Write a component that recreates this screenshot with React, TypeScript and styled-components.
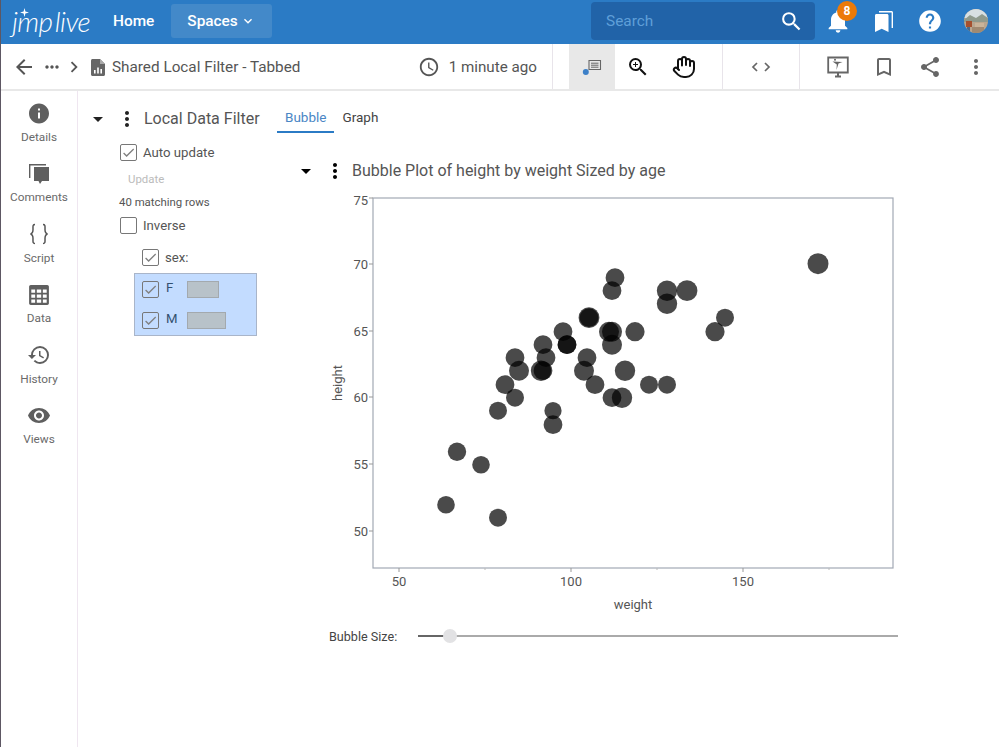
import React from "react";
import styled, { createGlobalStyle } from "styled-components";
import {
  MdArrowBack,
  MdMoreHoriz,
  MdChevronRight,
  MdAccessTime,
  MdZoomIn,
  MdBookmarkBorder,
  MdShare,
  MdMoreVert,
  MdSearch,
  MdNotifications,
  MdHelp,
  MdInfo,
  MdHistory,
  MdVisibility,
  MdArrowDropDown,
  MdExpandMore,
  MdCheck,
} from "react-icons/md";
import { LuHand } from "react-icons/lu";

const GlobalStyle = createGlobalStyle`
  html, body {
    margin: 0;
    padding: 0;
    background: #fff;
    font-family: Roboto, "Liberation Sans", sans-serif;
    overflow: hidden;
  }
  * { box-sizing: border-box; }
`;

const Page = styled.div`
  width: 999px;
  height: 747px;
  display: flex;
  flex-direction: column;
  border-left: 1px solid #5d5763;
  background: #fff;
`;

const TopBar = styled.header`
  height: 44px;
  flex: none;
  display: flex;
  align-items: center;
  padding-bottom: 2px;
  background: #2b7bc5;
  color: #fff;
`;

const Logo = styled.div`
  position: relative;
  width: 78px;
  margin-left: 11px;
  font-family: Lato, sans-serif;
  font-style: italic;
  font-size: 28px;
  font-weight: 300;
  letter-spacing: -0.6px;
  word-spacing: -4px;
  line-height: 30px;
  white-space: nowrap;
  svg {
    position: absolute;
    left: 8px;
    top: 2px;
  }
`;

const HomeLink = styled.a`
  margin-left: 23px;
  font-size: 15.4px;
  font-weight: 500;
`;

const SpacesButton = styled.a`
  margin-left: 17px;
  width: 101px;
  height: 34px;
  padding-left: 16px;
  border-radius: 3px;
  background: #4389c9;
  display: flex;
  align-items: center;
  gap: 2px;
  font-size: 15.4px;
  font-weight: 500;
`;

const SearchBox = styled.div`
  margin-left: auto;
  width: 224px;
  height: 38px;
  padding: 0 11px 0 15px;
  border-radius: 4px;
  background: #2163a8;
  display: flex;
  align-items: center;
  justify-content: space-between;
  color: #5f9fd8;
  font-size: 15.4px;
  svg { color: #fff; }
`;

const IconGroup = styled.div`
  display: flex;
  height: 100%;
`;

const TopIcon = styled.div`
  position: relative;
  width: 46px;
  display: flex;
  align-items: center;
  justify-content: center;
`;

const Badge = styled.span`
  position: absolute;
  left: 22px;
  top: 1px;
  width: 20px;
  height: 20px;
  border-radius: 50%;
  background: #ec7a08;
  color: #fff;
  font-size: 12px;
  font-weight: 700;
  display: flex;
  align-items: center;
  justify-content: center;
`;

const ToolBar = styled.div`
  height: 47px;
  flex: none;
  display: flex;
  align-items: stretch;
  border-bottom: 2px solid #e8e8e8;
  color: #5f5f5f;
`;

const Breadcrumb = styled.div`
  flex: 1;
  display: flex;
  align-items: center;
  padding: 1px 0 0 11px;
  font-size: 15.3px;
  color: #555;
`;

const CrumbIcon = styled.span<{ $gap?: number }>`
  display: flex;
  margin-right: ${({ $gap }) => $gap ?? 0}px;
`;

const TimeAgo = styled.div`
  display: flex;
  align-items: center;
  gap: 9px;
  padding: 0 15px 0 0;
  font-size: 15.2px;
  color: #555;
`;

const ToolSection = styled.div<{ $width: number; $pad?: number }>`
  width: ${({ $width }) => $width}px;
  padding-left: ${({ $pad }) => $pad ?? 0}px;
  border-left: 1px solid #e8e4ea;
  display: flex;
  align-items: stretch;
`;

const ToolButton = styled.div<{ $active?: boolean; $dark?: boolean; $fill?: boolean }>`
  width: ${({ $fill }) => ($fill ? "100%" : "46px")};
  display: flex;
  align-items: center;
  justify-content: center;
  background: ${({ $active }) => ($active ? "#e8e8e8" : "transparent")};
  color: ${({ $dark }) => ($dark ? "#111" : "#666")};
`;

const Body = styled.div`
  flex: 1;
  display: flex;
  min-height: 0;
`;

const SideBar = styled.nav`
  width: 77px;
  flex: none;
  padding-top: 10px;
  border-right: 1px solid #efe6f0;
`;

const SideItem = styled.div`
  height: 60.4px;
  display: flex;
  flex-direction: column;
  align-items: center;
  color: #6a6a6a;
  font-size: 11.8px;
  line-height: 14px;
  span { margin-top: 4px; }
`;

const SideIcon = styled.div`
  width: 24px;
  height: 25px;
  display: flex;
  align-items: center;
  justify-content: center;
  color: #5f5f5f;
`;

const FilterPanel = styled.section`
  width: 199px;
  flex: none;
  color: #555;
`;

const PanelHead = styled.div`
  height: 27px;
  margin-top: 14px;
  display: flex;
  align-items: center;
  padding-left: 8px;
  color: #222;
`;

const HeadTitle = styled.span`
  font-size: 16px;
  color: #555;
  white-space: nowrap;
`;

const CaretBox = styled.span`
  display: flex;
  width: 24px;
`;

const DotsBox = styled.span`
  display: flex;
  margin-left: 5px;
  margin-right: 5px;
  width: 24px;
  justify-content: center;
`;

const CheckRow = styled.label<{ $indent: number; $top?: number }>`
  display: flex;
  align-items: center;
  gap: 6px;
  height: 16px;
  margin-left: ${({ $indent }) => $indent}px;
  margin-top: ${({ $top }) => $top ?? 0}px;
  font-size: 13.2px;
  color: #555;
`;

const Box = styled.span`
  width: 17px;
  height: 17px;
  flex: none;
  border: 1.8px solid #777;
  border-radius: 2px;
  display: flex;
  align-items: center;
  justify-content: center;
  color: #808080;
`;

const UpdateLabel = styled.div`
  margin: 12px 0 0 50px;
  font-size: 11.4px;
  line-height: 14px;
  color: #bbb;
`;

const MatchCount = styled.div`
  margin: 9px 0 0 41px;
  font-size: 11.4px;
  line-height: 14px;
  color: #555;
`;

const LevelBox = styled.div`
  width: 123px;
  height: 63px;
  margin: 8px 0 0 56px;
  padding: 7px 7px;
  background: #c3dcff;
  border: 1px solid #a9b5c9;
  display: flex;
  flex-direction: column;
  gap: 14px;
`;

const LevelRow = styled.div`
  display: flex;
  align-items: flex-start;
  height: 17px;
  font-size: 13.2px;
  line-height: 14px;
  color: #33506f;
`;

const LevelName = styled.span`
  width: 21px;
  margin-left: 7px;
`;

const Swatch = styled.span<{ $width: number }>`
  width: ${({ $width }) => $width}px;
  height: 17px;
  background: #b8c2c9;
  border: 1px solid #a3a9ae;
`;

const TabPane = styled.section`
  flex: 1;
  min-width: 0;
`;

const TabStrip = styled.div`
  display: flex;
  margin-top: 13px;
  height: 29px;
`;

const Tab = styled.div<{ $active?: boolean }>`
  padding: 0 8px;
  font-size: 13.5px;
  line-height: 26px;
  color: ${({ $active }) => ($active ? "#4a86c5" : "#444")};
  border-bottom: 2px solid ${({ $active }) => ($active ? "#2b7bc5" : "transparent")};
`;

const PlotHead = styled.div`
  height: 27px;
  margin-top: 24px;
  padding-left: 17px;
  display: flex;
  align-items: center;
`;

const PlotFrame = styled.svg`
  display: block;
  width: 580px;
  height: 425px;
  margin: 6px 0 0 48px;
  font-family: Roboto, sans-serif;
`;

const SliderRow = styled.div`
  display: flex;
  align-items: center;
  height: 20px;
  margin: 11px 0 0 52px;
  font-size: 12.6px;
  color: #444;
`;

const SliderLabel = styled.span`
  width: 89px;
`;

const SliderTrack = styled.div`
  position: relative;
  width: 480px;
  height: 2px;
  background: #aaa;
`;

const SliderFill = styled.div`
  height: 2px;
  background: #666;
`;

const SliderThumb = styled.div`
  position: absolute;
  top: -6px;
  width: 14px;
  height: 14px;
  margin-left: -7px;
  border-radius: 50%;
  background: #e2e2e4;
`;

const bubbles: [number, number, number][] = [
  [818, 263, 10.5], [687, 290, 10.4], [667, 290, 10.2], [667, 303, 10.2],
  [615, 277, 9.4], [612, 290, 9.4], [589, 317, 10.4], [589, 317, 9.4],
  [563, 331, 9.4], [567, 344, 9.4], [567, 344, 9.4], [543, 344, 9.4],
  [546, 357, 9.4], [515, 357, 9.4], [519, 370, 10], [505, 384, 9.4],
  [515, 397, 9], [498, 410, 9], [541, 370, 10.2], [543, 370, 9.4],
  [553, 410, 8.6], [553, 424, 9.4], [587, 357, 9.4], [584, 370, 10],
  [595, 384, 9.4], [609, 331, 10], [612, 331, 10], [612, 344, 10],
  [635, 331, 9.6], [625, 370, 10.2], [612, 397, 9.4], [622, 397, 10.2],
  [649, 384, 9], [667, 384, 9], [725, 317, 9], [715, 331, 9.6],
  [457, 451, 9.2], [481, 464, 8.8], [446, 504, 8.8], [498, 517, 9],
];

const yTicks: [string, number][] = [["75", 198], ["70", 264], ["65", 331], ["60", 397], ["55", 464], ["50", 531]];
const xTicks: [string, number][] = [["50", 399], ["100", 571], ["150", 743]];
const xMinor = [485, 657, 829];

const Plot = () => (
  <PlotFrame viewBox="325 190 580 425">
    <rect x="373" y="198" width="520" height="370" fill="#fff" stroke="#a2a9b4" strokeWidth="1.2" />
    {yTicks.map(([label, y]) => (
      <g key={label}>
        <line x1="369" x2="373" y1={y} y2={y} stroke="#999" />
        <text x="368" y={y + (label === "75" ? 7 : 5)} textAnchor="end" fontSize="13" fill="#555">{label}</text>
      </g>
    ))}
    {xTicks.map(([label, x]) => (
      <g key={label}>
        <line x1={x} x2={x} y1="568" y2="572" stroke="#999" />
        <text x={x} y="586" textAnchor="middle" fontSize="13" fill="#555">{label}</text>
      </g>
    ))}
    {xMinor.map((x) => (
      <line key={x} x1={x} x2={x} y1="568" y2="570" stroke="#bbb" />
    ))}
    <text x="633" y="609" textAnchor="middle" fontSize="13" fill="#555">weight</text>
    <text transform="translate(342 383) rotate(-90)" textAnchor="middle" fontSize="13" fill="#555">height</text>
    {bubbles.map(([x, y, r], i) => (
      <circle key={i} cx={x} cy={y + 0.7} r={r} fill="#000" fillOpacity="0.71" />
    ))}
  </PlotFrame>
);

const LogoStar = () => (
  <svg width="9" height="9" viewBox="0 0 10 10">
    <path d="M5 0 L6 4 L10 5 L6 6 L5 10 L4 6 L0 5 L4 4 Z" fill="#fff" />
  </svg>
);

const BookmarksIcon = () => (
  <svg width="24" height="24" viewBox="0 0 24 24" fill="#fff">
    <path d="M3 6.5 C3 5.7 3.6 5 4.4 5 H15 C15.8 5 16.5 5.7 16.5 6.5 V23 L9.7 19.7 L3 23 Z" />
    <path d="M7 2 H19.5 C20.3 2 21 2.7 21 3.5 V19 H19.6 V3.4 H7 Z" />
  </svg>
);

const Avatar = () => (
  <svg width="24" height="24" viewBox="0 0 24 24">
    <defs>
      <clipPath id="avatar-clip"><circle cx="12" cy="12" r="12" /></clipPath>
    </defs>
    <g clipPath="url(#avatar-clip)">
      <rect width="24" height="24" fill="#b9a68f" />
      <rect width="24" height="9" fill="#d7dfe2" />
      <path d="M0 11 L6 6 L12 9 L18 5 L24 9 V13 H0 Z" fill="#8f9a8d" />
      <rect x="2" y="12" width="6" height="6" fill="#a5502f" />
      <rect x="3" y="18" width="3" height="6" fill="#4a6a8a" />
      <rect x="11" y="14" width="9" height="4" fill="#c9b49a" />
      <rect x="8" y="18" width="12" height="6" fill="#a08a72" />
    </g>
  </svg>
);

const ReportFileIcon = () => (
  <svg width="14" height="17" viewBox="0 0 14 17">
    <path d="M1.5 0 H9 L14 5 V15.5 C14 16.3 13.3 17 12.5 17 H1.5 C0.7 17 0 16.3 0 15.5 V1.5 C0 0.7 0.7 0 1.5 0 Z" fill="#666" />
    <path d="M3 14.5 V11 H4.6 V14.5 Z M6.2 14.5 V8.5 H7.8 V14.5 Z M9.4 14.5 V10 H11 V14.5 Z" fill="#fff" />
    <path d="M9 0 L14 5 H9 Z" fill="#aaa" />
  </svg>
);

const CommentNoteIcon = () => (
  <svg width="24" height="24" viewBox="0 0 24 24">
    <path d="M9 5.5 H20.5 V14.5 H9 Z" fill="none" stroke="#666" strokeWidth="1.1" />
    <path d="M11 8.2 H18.5 M11 10.2 H18.5 M11 12.2 H18.5" stroke="#666" strokeWidth="1" />
    <circle cx="5.8" cy="17" r="3" fill="#3d80c8" />
  </svg>
);

const PresentIcon = () => (
  <svg width="24" height="24" viewBox="0 0 24 24">
    <path d="M2.2 2.5 H21.8 V17.5 H2.2 Z" fill="none" stroke="#666" strokeWidth="1.8" />
    <path d="M9 21.5 H15 M12 17.5 V21.5" stroke="#666" strokeWidth="2" />
    <path d="M6.5 6.5 L16.5 7 L12.5 8.5 L10.5 15 L10.8 9.5 Z" fill="#666" />
    <circle cx="9" cy="4.8" r="1" fill="#666" />
  </svg>
);

const CodeIcon = () => (
  <svg width="20" height="12" viewBox="0 0 20 12" fill="none" stroke="#666" strokeWidth="1.7">
    <path d="M6 2 L2 6 L6 10 M14 2 L18 6 L14 10" />
  </svg>
);

const CommentsIcon = () => (
  <svg width="24" height="24" viewBox="0 0 24 24" fill="#5f5f5f">
    <path d="M7 5 H22 V19 H15 L13 22 L11.5 19 H7 Z" />
    <path d="M2 2 H19 V3.4 H3.4 V16 H2 Z" />
  </svg>
);

const ScriptIcon = () => (
  <svg width="24" height="24" viewBox="0 0 24 24" fill="none" stroke="#555" strokeWidth="1.5">
    <path d="M8 2.5 C5.5 2.5 6 4.5 6 7.5 C6 10 5.5 11.5 3.5 12 C5.5 12.5 6 14 6 16.5 C6 19.5 5.5 21.5 8 21.5" />
    <path d="M16 2.5 C18.5 2.5 18 4.5 18 7.5 C18 10 18.5 11.5 20.5 12 C18.5 12.5 18 14 18 16.5 C18 19.5 18.5 21.5 16 21.5" />
  </svg>
);

const DataIcon = () => (
  <svg width="22" height="22" viewBox="0 0 20 20" fill="#5f5f5f">
    <path d="M2.5 1 H17.5 C18.3 1 19 1.7 19 2.5 V17.5 C19 18.3 18.3 19 17.5 19 H2.5 C1.7 19 1 18.3 1 17.5 V2.5 C1 1.7 1.7 1 2.5 1 Z M3 5 V8 H6.5 V5 Z M8 5 V8 H12 V5 Z M13.5 5 V8 H17 V5 Z M3 9.5 V12.5 H6.5 V9.5 Z M8 9.5 V12.5 H12 V9.5 Z M13.5 9.5 V12.5 H17 V9.5 Z M3 14 V17 H6.5 V14 Z M8 14 V17 H12 V14 Z M13.5 14 V17 H17 V14 Z" fillRule="evenodd" />
  </svg>
);

const Check = () => (
  <Box><MdCheck size={15} /></Box>
);

const sideItems = [
  { label: "Details", icon: <MdInfo size={25} /> },
  { label: "Comments", icon: <CommentsIcon /> },
  { label: "Script", icon: <ScriptIcon /> },
  { label: "Data", icon: <DataIcon /> },
  { label: "History", icon: <MdHistory size={24} /> },
  { label: "Views", icon: <MdVisibility size={25} /> },
];

export default function App() {
  return (
    <>
      <GlobalStyle />
      <Page>
        <TopBar>
          <Logo><LogoStar />jmp live</Logo>
          <HomeLink>Home</HomeLink>
          <SpacesButton>Spaces <MdExpandMore size={16} /></SpacesButton>
          <SearchBox>Search <MdSearch size={25} /></SearchBox>
          <IconGroup>
            <TopIcon><MdNotifications size={28} /><Badge>8</Badge></TopIcon>
            <TopIcon><BookmarksIcon /></TopIcon>
            <TopIcon><MdHelp size={26} /></TopIcon>
            <TopIcon><Avatar /></TopIcon>
          </IconGroup>
        </TopBar>
        <ToolBar>
          <Breadcrumb>
            <CrumbIcon $gap={6}><MdArrowBack size={24} /></CrumbIcon>
            <CrumbIcon $gap={1}><MdMoreHoriz size={20} /></CrumbIcon>
            <CrumbIcon $gap={6}><MdChevronRight size={22} /></CrumbIcon>
            <CrumbIcon $gap={7}><ReportFileIcon /></CrumbIcon>
            Shared Local Filter - Tabbed
          </Breadcrumb>
          <TimeAgo><MdAccessTime size={22} />1 minute ago</TimeAgo>
          <ToolSection $width={170} $pad={16}>
            <ToolButton $active><CommentNoteIcon /></ToolButton>
            <ToolButton $dark><MdZoomIn size={24} /></ToolButton>
            <ToolButton $dark><LuHand size={24} /></ToolButton>
          </ToolSection>
          <ToolSection $width={77}>
            <ToolButton $fill><CodeIcon /></ToolButton>
          </ToolSection>
          <ToolSection $width={200} $pad={15}>
            <ToolButton><PresentIcon /></ToolButton>
            <ToolButton><MdBookmarkBorder size={24} /></ToolButton>
            <ToolButton><MdShare size={24} /></ToolButton>
            <ToolButton><MdMoreVert size={24} /></ToolButton>
          </ToolSection>
        </ToolBar>
        <Body>
          <SideBar>
            {sideItems.map((item) => (
              <SideItem key={item.label}>
                <SideIcon>{item.icon}</SideIcon>
                <span>{item.label}</span>
              </SideItem>
            ))}
          </SideBar>
          <FilterPanel>
            <PanelHead>
              <CaretBox><MdArrowDropDown size={24} /></CaretBox>
              <DotsBox><MdMoreVert size={24} /></DotsBox>
              <HeadTitle>Local Data Filter</HeadTitle>
            </PanelHead>
            <CheckRow $indent={42} $top={12}><Check />Auto update</CheckRow>
            <UpdateLabel>Update</UpdateLabel>
            <MatchCount>40 matching rows</MatchCount>
            <CheckRow $indent={42} $top={8}><Box />Inverse</CheckRow>
            <CheckRow $indent={64} $top={16}><Check />sex:</CheckRow>
            <LevelBox>
              <LevelRow><Check /><LevelName>F</LevelName><Swatch $width={32} /></LevelRow>
              <LevelRow><Check /><LevelName>M</LevelName><Swatch $width={39} /></LevelRow>
            </LevelBox>
          </FilterPanel>
          <TabPane>
            <TabStrip>
              <Tab $active>Bubble</Tab>
              <Tab>Graph</Tab>
            </TabStrip>
            <PlotHead>
              <CaretBox><MdArrowDropDown size={24} /></CaretBox>
              <DotsBox><MdMoreVert size={24} /></DotsBox>
              <HeadTitle>Bubble Plot of height by weight Sized by age</HeadTitle>
            </PlotHead>
            <Plot />
            <SliderRow>
              <SliderLabel>Bubble Size:</SliderLabel>
              <SliderTrack>
                <SliderFill style={{ width: 32 }} />
                <SliderThumb style={{ left: 32 }} />
              </SliderTrack>
            </SliderRow>
          </TabPane>
        </Body>
      </Page>
    </>
  );
}
